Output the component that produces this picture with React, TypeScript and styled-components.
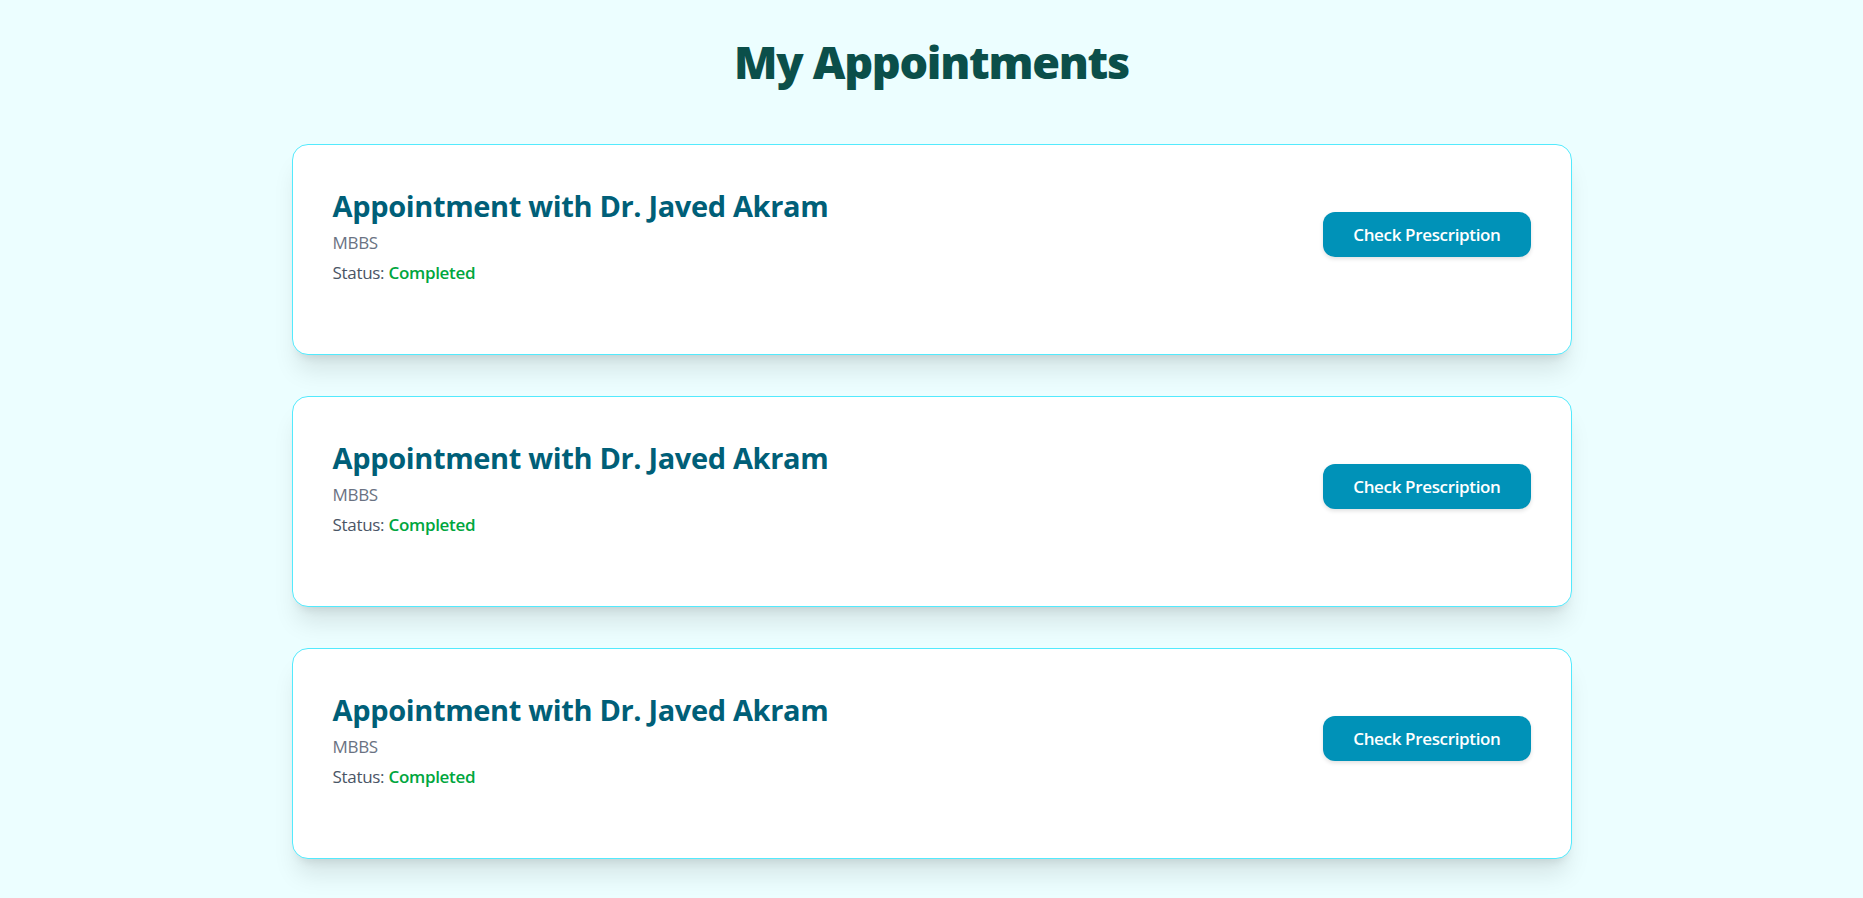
import React from "react";
import styled, { createGlobalStyle } from "styled-components";

const GlobalStyle = createGlobalStyle`
  html, body {
    margin: 0;
    padding: 0;
    background: #ecfeff;
    font-family: "Open Sans", "Noto Sans", sans-serif;
  }
  * { box-sizing: border-box; }
`;

const Page = styled.main`
  min-height: 100vh;
  background: #ecfeff;
  padding: 38px 0 40px;
`;

const Title = styled.h1`
  margin: 0 0 58px;
  text-align: center;
  font-size: 45px;
  line-height: 48px;
  font-weight: 800;
  letter-spacing: -1.3px;
  color: #0b4f4a;
`;

const List = styled.section`
  width: 1280px;
  margin: 0 auto;
  display: flex;
  flex-direction: column;
  gap: 41px;
`;

const Card = styled.article`
  height: 211px;
  background: #ffffff;
  border: 1px solid #53eafd;
  border-radius: 16px;
  padding: 40px 40px 67px;
  box-shadow: 0 20px 25px -5px rgba(0, 0, 0, 0.1), 0 8px 10px -6px rgba(0, 0, 0, 0.1);
`;

const Row = styled.div`
  display: flex;
  align-items: center;
  justify-content: space-between;
`;

const Info = styled.div`
  display: flex;
  flex-direction: column;
`;

const DoctorTitle = styled.h2`
  margin: 0;
  font-size: 29px;
  line-height: 42px;
  font-weight: 700;
  letter-spacing: -0.35px;
  color: #005f78;
`;

const Line = styled.p<{ $tone: "muted" | "normal"; $gap: number }>`
  margin: ${(p) => p.$gap}px 0 0;
  font-size: 17px;
  line-height: 28px;
  letter-spacing: -0.3px;
  color: ${(p) => (p.$tone === "muted" ? "#6a7282" : "#4a5565")};
`;

const StatusValue = styled.span`
  font-weight: 600;
  color: #00a63e;
`;

const Button = styled.button`
  height: 45px;
  padding: 0 30px;
  margin-bottom: 3px;
  border: none;
  border-radius: 12px;
  background: #0092b8;
  color: #ffffff;
  font-family: "Open Sans", "Noto Sans", sans-serif;
  font-size: 17px;
  font-weight: 600;
  letter-spacing: -0.35px;
  line-height: 45px;
  cursor: pointer;
  box-shadow: 0 2px 4px rgba(0, 0, 0, 0.12);
`;

type Appointment = { id: number; doctor: string; degree: string; status: string };

const appointments: Appointment[] = [
  { id: 1, doctor: "Dr. Javed Akram", degree: "MBBS", status: "Completed" },
  { id: 2, doctor: "Dr. Javed Akram", degree: "MBBS", status: "Completed" },
  { id: 3, doctor: "Dr. Javed Akram", degree: "MBBS", status: "Completed" },
];

export default function App() {
  return (
    <>
      <GlobalStyle />
      <Page>
        <Title>My Appointments</Title>
        <List>
          {appointments.map((a) => (
            <Card key={a.id}>
              <Row>
                <Info>
                  <DoctorTitle>Appointment with {a.doctor}</DoctorTitle>
                  <Line $tone="muted" $gap={2}>{a.degree}</Line>
                  <Line $tone="normal" $gap={2}>
                    Status: <StatusValue>{a.status}</StatusValue>
                  </Line>
                </Info>
                <Button>Check Prescription</Button>
              </Row>
            </Card>
          ))}
        </List>
      </Page>
    </>
  );
}
